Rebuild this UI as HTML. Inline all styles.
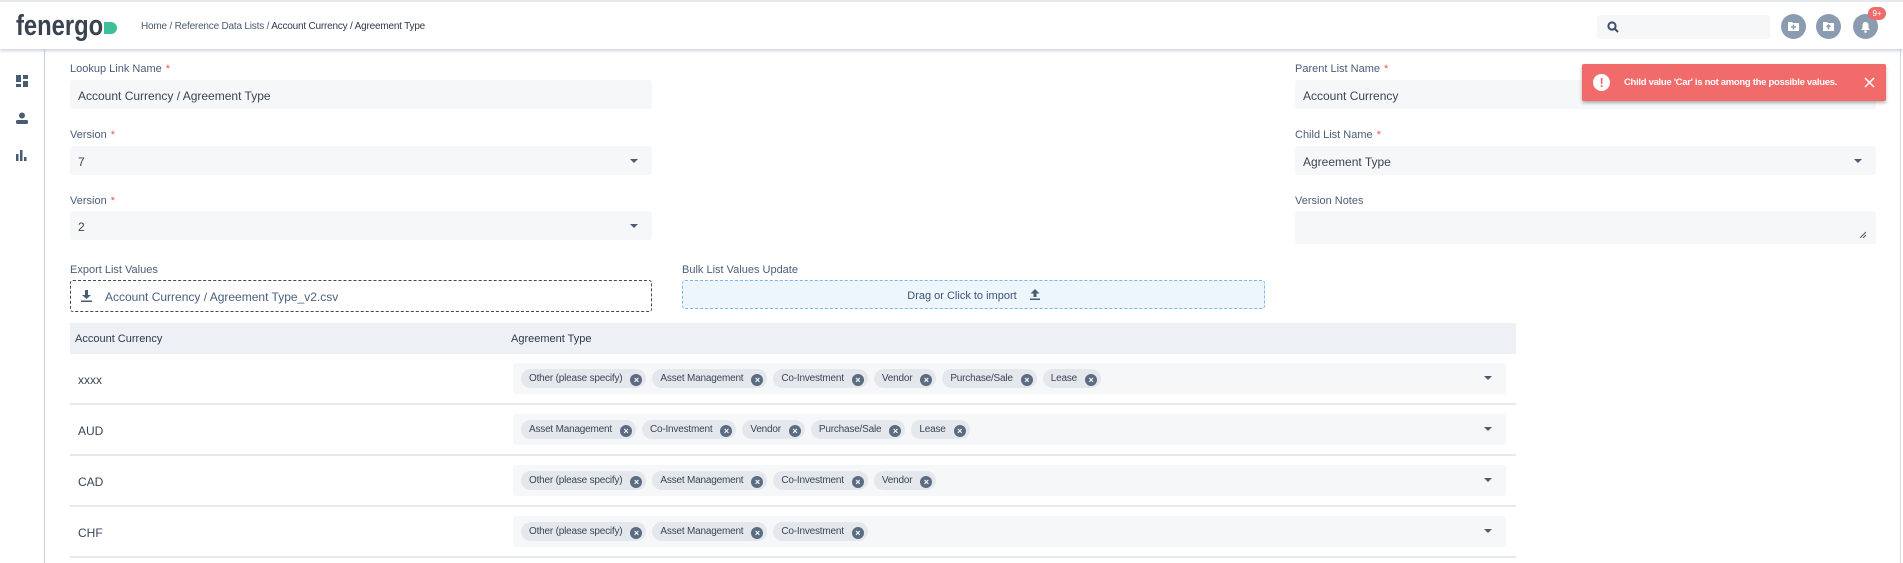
<!DOCTYPE html>
<html><head><meta charset="utf-8"><style>
*{box-sizing:border-box;margin:0;padding:0}
body{width:1903px;height:563px;overflow:hidden;background:#fff;font-family:"Liberation Sans",sans-serif;color:#3b4658;position:relative}
.hdr{position:absolute;left:0;top:0;width:1903px;height:49px;background:#fff;border-top:2px solid #e6e9ee;box-shadow:0 2px 3px rgba(120,135,160,.35);z-index:2}
.logo{position:absolute;left:16px;top:8px;font-size:29px;font-weight:bold;color:#3a4350;transform:scaleX(.82);transform-origin:left top;white-space:nowrap}
.pill{position:absolute;left:104px;top:20px;width:13px;height:12px;background:#3dbf9a;border-radius:0 6px 6px 0}
.bc{position:absolute;left:141px;top:19px;font-size:10px;color:#4a5a70;letter-spacing:-.2px}
.bc b{color:#2f3a4a;font-weight:normal}
.search{position:absolute;left:1597px;top:13px;width:173px;height:24px;background:#f6f7f9;border-radius:3px}
.ic{position:absolute;top:12px;width:25px;height:25px;border-radius:50%;background:#8b9bb0}
.side{position:absolute;left:0;top:49px;width:45px;height:514px;border-right:1px solid #c9d0da}
.lbl{position:absolute;font-size:11px;color:#4b5d78}
.lbl i{color:#e55;font-style:normal;margin-left:4px}
.inp{position:absolute;height:29px;background:#f6f7f9;border-radius:3px;font-size:12px;color:#3a4556;padding:9px 8px 0}
.car{position:absolute;right:14px;top:13px;width:0;height:0;border-left:4px solid transparent;border-right:4px solid transparent;border-top:4px solid #4a5c75}
.th{position:absolute;left:70px;top:323px;width:1446px;height:31px;background:#edf1f5;font-size:11px;color:#2e3a4c}
.row{position:absolute;left:70px;width:1446px;height:51px;border-bottom:2px solid #e6e9ee}
.row .c{position:absolute;left:8px;top:19px;font-size:12px;color:#3a4556}
.chips{position:absolute;left:443px;top:9px;width:993px;height:31px;background:#f6f7f9;border-radius:3px;padding:6px 0 0 8px;white-space:nowrap}
.chip{display:inline-block;height:19px;background:#e4e8ed;border-radius:10px;font-size:10px;color:#3a4556;padding:4px 4px 0 8px;margin-right:6px;vertical-align:top;letter-spacing:-.2px}
.chip s{display:inline-block;width:12px;height:12px;border-radius:50%;background:#5a6b82;color:#fff;font-size:9px;text-decoration:none;text-align:center;line-height:12px;margin-left:8px;vertical-align:-2px;font-weight:bold}
.chips .car{top:13px}
</style></head><body>
<div class="hdr">
<div class="logo">fenergo</div><div class="pill"></div>
<div class="bc">Home / Reference Data Lists / <b>Account Currency / Agreement Type</b></div>
<div class="search"><svg style="position:absolute;left:10px;top:6px" width="12" height="12" viewBox="0 0 12 12"><circle cx="5" cy="5" r="3.6" fill="none" stroke="#3e4f68" stroke-width="2"/><path d="M7.5 7.5L11 11" stroke="#3e4f68" stroke-width="2"/></svg></div>
<div class="ic" style="left:1781px"><svg width="25" height="25" viewBox="0 0 25 25"><path d="M7 8h4l1 1h6v8H7z" fill="#fff"/><path d="M12.5 10.5v5M10 13h5" stroke="#8b9bb0" stroke-width="1.5"/></svg></div>
<div class="ic" style="left:1816px"><svg width="25" height="25" viewBox="0 0 25 25"><path d="M7 8h4l1 1h6v8H7z" fill="#fff"/><path d="M12.5 15.5v-4M10.5 13l2-2 2 2" stroke="#8b9bb0" stroke-width="1.5" fill="none"/></svg></div>
<div class="ic" style="left:1853px"><svg width="25" height="25" viewBox="0 0 25 25"><path d="M8 16h9l-1.5-2v-3a3 3 0 0 0-6 0v3z" fill="#fff"/><circle cx="12.5" cy="17.5" r="1.3" fill="#fff"/></svg></div>
<div style="position:absolute;left:1868px;top:5px;width:18px;height:13px;border-radius:7px;background:#f06b6b;color:#fff;font-size:8px;text-align:center;line-height:13px">9+</div>
</div>
<div class="side">
<svg style="position:absolute;left:16px;top:26px" width="12" height="12" viewBox="0 0 12 12" fill="#4a5c75"><rect x="0" y="0" width="5" height="7"/><rect x="7" y="0" width="5" height="4"/><rect x="0" y="9" width="5" height="3"/><rect x="7" y="6" width="5" height="6"/></svg>
<svg style="position:absolute;left:16px;top:63px" width="12" height="12" viewBox="0 0 12 12" fill="#4a5c75"><circle cx="6" cy="3.5" r="3"/><rect x="0" y="8" width="12" height="4" rx="1.5"/></svg>
<svg style="position:absolute;left:16px;top:100px" width="12" height="12" viewBox="0 0 12 12" fill="#4a5c75"><rect x="0" y="5" width="2.5" height="7"/><rect x="4" y="1" width="2.5" height="11"/><rect x="8" y="8" width="2.5" height="4"/></svg>
</div>

<div class="lbl" style="left:70px;top:63px">Lookup Link Name<i>*</i></div>
<div class="inp" style="left:70px;top:80px;width:582px">Account Currency / Agreement Type</div>
<div class="lbl" style="left:70px;top:129px">Version<i>*</i></div>
<div class="inp" style="left:70px;top:146px;width:582px">7<div class="car"></div></div>
<div class="lbl" style="left:70px;top:195px">Version<i>*</i></div>
<div class="inp" style="left:70px;top:211px;width:582px">2<div class="car"></div></div>
<div class="lbl" style="left:70px;top:264px">Export List Values</div>
<div style="position:absolute;left:70px;top:280px;width:582px;height:32px;border:1px dashed #3a4a60;border-radius:3px;font-size:12px;color:#4a5f80;padding:9px 0 0 34px">
<svg style="position:absolute;left:10px;top:9px" width="11" height="12" viewBox="0 0 11 12" fill="#4a5c75"><path d="M4 0h3v5h3L5.5 9 1 5h3z"/><rect x="0" y="10.5" width="11" height="1.5"/></svg>Account Currency / Agreement Type_v2.csv</div>
<div class="lbl" style="left:682px;top:264px">Bulk List Values Update</div>
<div style="position:absolute;left:682px;top:280px;width:583px;height:29px;border:1px dashed #7fb5ea;border-radius:3px;background:#eef6fd;font-size:11px;color:#3f5270;text-align:center;padding-top:8px">Drag or Click to import <svg style="margin-left:10px;vertical-align:-1px" width="10" height="11" viewBox="0 0 10 11" fill="#4a5c75"><path d="M3.5 8h3V4.5h3L5 0 .5 4.5h3z"/><rect x="0" y="9.5" width="10" height="1.5"/></svg></div>

<div class="lbl" style="left:1295px;top:63px">Parent List Name<i>*</i></div>
<div class="inp" style="left:1295px;top:80px;width:581px">Account Currency</div>
<div class="lbl" style="left:1295px;top:129px">Child List Name<i>*</i></div>
<div class="inp" style="left:1295px;top:146px;width:581px">Agreement Type<div class="car"></div></div>
<div class="lbl" style="left:1295px;top:195px">Version Notes</div>
<div class="inp" style="left:1295px;top:211px;width:581px;height:33px"><svg style="position:absolute;right:10px;bottom:6px" width="7" height="7"><path d="M1 7L7 1M4 7L7 4" stroke="#555" stroke-width="1"/></svg></div>

<div style="position:absolute;left:1582px;top:64px;width:304px;height:37px;background:#f16b6b;border-radius:2px;box-shadow:0 2px 3px rgba(0,0,0,.3);color:#fff;font-size:9.5px;font-weight:bold;letter-spacing:-.3px">
<div style="position:absolute;left:11px;top:10px;width:17px;height:17px;border-radius:50%;background:#fff;color:#f16b6b;text-align:center;font-size:13px;line-height:17px">!</div>
<div style="position:absolute;left:42px;top:13px">Child value 'Car' is not among the possible values.</div>
<svg style="position:absolute;left:282px;top:13px" width="11" height="11"><path d="M1 1L10 10M10 1L1 10" stroke="#fff" stroke-width="1.5"/></svg></div>
<div style="position:absolute;left:1900px;top:49px;width:1px;height:514px;background:#d5dae2"></div>

<div class="th"><span style="position:absolute;left:5px;top:10px">Account Currency</span><span style="position:absolute;left:441px;top:10px">Agreement Type</span></div>

<div class="row" style="top:354px"><div class="c">xxxx</div><div class="chips"><span class="chip">Other (please specify)<s>×</s></span><span class="chip">Asset Management<s>×</s></span><span class="chip">Co-Investment<s>×</s></span><span class="chip">Vendor<s>×</s></span><span class="chip">Purchase/Sale<s>×</s></span><span class="chip">Lease<s>×</s></span><div class="car"></div></div></div>
<div class="row" style="top:405px"><div class="c">AUD</div><div class="chips"><span class="chip">Asset Management<s>×</s></span><span class="chip">Co-Investment<s>×</s></span><span class="chip">Vendor<s>×</s></span><span class="chip">Purchase/Sale<s>×</s></span><span class="chip">Lease<s>×</s></span><div class="car"></div></div></div>
<div class="row" style="top:456px"><div class="c">CAD</div><div class="chips"><span class="chip">Other (please specify)<s>×</s></span><span class="chip">Asset Management<s>×</s></span><span class="chip">Co-Investment<s>×</s></span><span class="chip">Vendor<s>×</s></span><div class="car"></div></div></div>
<div class="row" style="top:507px"><div class="c">CHF</div><div class="chips"><span class="chip">Other (please specify)<s>×</s></span><span class="chip">Asset Management<s>×</s></span><span class="chip">Co-Investment<s>×</s></span><div class="car"></div></div></div>
</body></html>
